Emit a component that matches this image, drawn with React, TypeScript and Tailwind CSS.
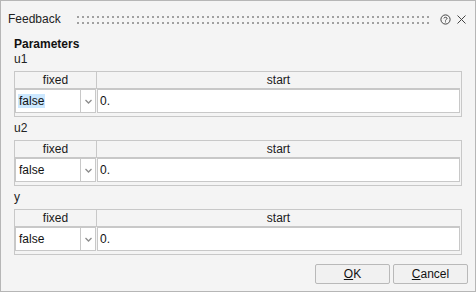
import React from "react";

type Param = { name: string; fixed: string; start: string; selected?: boolean };

const params: Param[] = [
  { name: "u1", fixed: "false", start: "0.", selected: true },
  { name: "u2", fixed: "false", start: "0." },
  { name: "y", fixed: "false", start: "0." },
];

function Grip() {
  return (
    <svg className="h-[8px] w-full" aria-hidden>
      <defs>
        <pattern id="grip" width="5" height="6" patternUnits="userSpaceOnUse">
          <rect x="0" y="0" width="2" height="2" fill="#a0a0a0" />
        </pattern>
      </defs>
      <rect x="0" y="0" width="100%" height="8" fill="url(#grip)" />
    </svg>
  );
}

function ParamTable({ p }: { p: Param }) {
  return (
    <div className="border border-[#c8c8c8] bg-[#f4f4f4] pb-[3px] pr-[1px]">
      <div className="flex h-[17px] items-center border-b border-[#c8c8c8] text-[12px] leading-[14px] text-[#1a1a1a]">
        <div className="flex h-full w-[82px] items-center justify-center border-r border-[#c8c8c8]">fixed</div>
        <div className="flex h-full flex-1 items-center justify-center">start</div>
      </div>
      <div className="flex h-[24px] text-[12px] leading-[14px] text-[#111]">
        <div className="flex w-[81px] border border-[#c8c8c8] bg-white">
          <div className="flex flex-1 items-center pl-[2px]">
            <span className={p.selected ? "bg-[#cce8ff] px-[1px]" : "px-[1px]"}>{p.fixed}</span>
          </div>
          <div className="flex w-[15px] items-center justify-center border-l border-[#c8c8c8]">
            <svg width="7" height="5" viewBox="0 0 7 5" aria-hidden>
              <path d="M0.5 1 L3.5 4 L6.5 1" fill="none" stroke="#8c8c8c" strokeWidth="1.3" />
            </svg>
          </div>
        </div>
        <div className="ml-[1px] flex flex-1 items-center border border-[#c8c8c8] bg-white pl-[2px]">{p.start}</div>
      </div>
    </div>
  );
}

export default function App() {
  return (
    <div
      className="flex h-[292px] w-[476px] flex-col border border-[#b6b6b6] bg-[#f4f4f4] text-[#1a1a1a]"
      style={{ fontFamily: '"Liberation Sans", Arial, sans-serif' }}
    >
      <div className="flex h-[36px] shrink-0 items-center pl-[7px] pr-[9px]">
        <span className="text-[12px] leading-[14px] text-[#222]">Feedback</span>
        <div className="ml-[16px] flex flex-1 items-center pt-[2px]">
          <Grip />
        </div>
        <svg className="ml-[9px]" width="11" height="11" viewBox="0 0 11 11" aria-hidden>
          <circle cx="5.5" cy="5.5" r="4.6" fill="none" stroke="#444" strokeWidth="1" />
          <path d="M3.9 4.4 C3.9 2.9 7.1 2.9 7.1 4.4 C7.1 5.4 5.5 5.4 5.5 6.6" fill="none" stroke="#444" strokeWidth="1" />
          <rect x="5" y="7.4" width="1" height="1" fill="#444" />
        </svg>
        <svg className="ml-[6px]" width="9" height="9" viewBox="0 0 9 9" aria-hidden>
          <path d="M0.5 0.5 L8.5 8.5 M8.5 0.5 L0.5 8.5" stroke="#444" strokeWidth="1" />
        </svg>
      </div>

      <div className="flex flex-col px-[13px]">
        <div className="text-[12px] font-bold leading-[14px] text-[#111]">Parameters</div>
        {params.map((p, i) => (
          <div key={p.name} className={i === 0 ? "mt-[1px]" : "mt-[4px]"}>
            <div className="mb-[5px] text-[12px] leading-[14px] text-[#222]">{p.name}</div>
            <ParamTable p={p} />
          </div>
        ))}
      </div>

      <div className="mt-auto mb-[7px] flex justify-end gap-[3px] pr-[7px]">
        <button className="h-[20px] w-[75px] rounded-[2px] border border-[#b9b9b9] bg-[#f1f1f1] text-[12px] leading-[14px] text-[#111]">
          <span className="underline underline-offset-[1px]">O</span>K
        </button>
        <button className="h-[20px] w-[75px] rounded-[2px] border border-[#b9b9b9] bg-[#f1f1f1] text-[12px] leading-[14px] text-[#111]">
          <span className="underline underline-offset-[1px]">C</span>ancel
        </button>
      </div>
    </div>
  );
}
